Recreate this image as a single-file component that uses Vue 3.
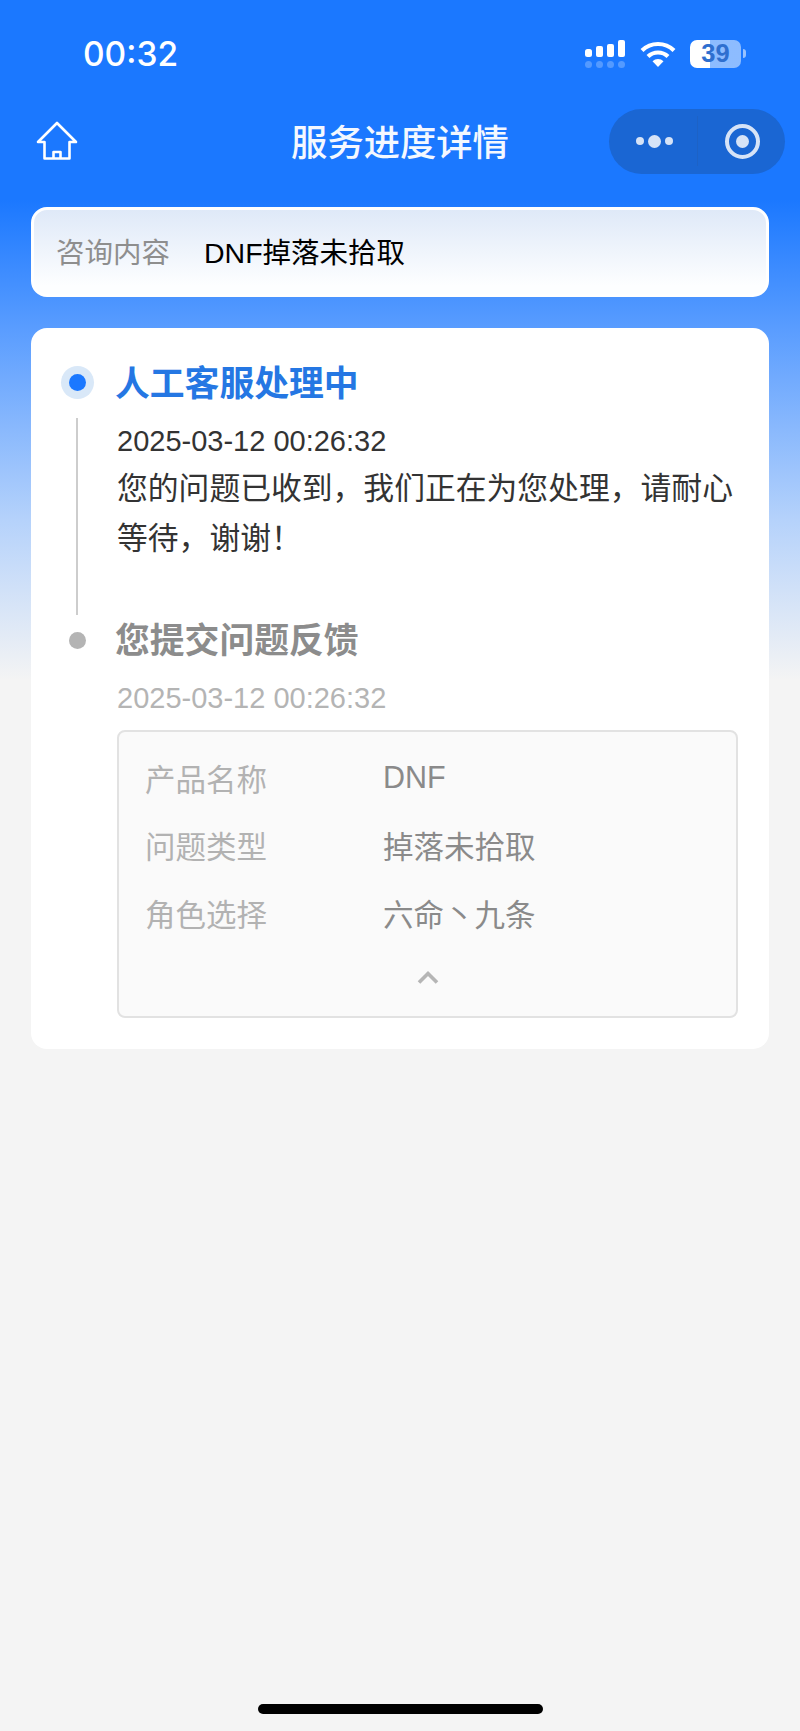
<template>
  <div class="page">
    <!-- status bar -->
    <div class="status-bar">
      <span class="time">00:32</span>
      <div class="status-icons">
        <svg class="signal" width="40" height="28" viewBox="0 0 40 28">
          <g fill="#fff">
            <rect x="0" y="9" width="7" height="8" rx="2.5" />
            <rect x="11" y="6" width="7" height="11" rx="2" />
            <rect x="22" y="4" width="7" height="13" rx="2" />
            <rect x="33" y="0" width="7" height="17" rx="2" />
          </g>
          <g fill="#fff" opacity="0.25">
            <circle cx="3.5" cy="24.5" r="3.5" />
            <circle cx="14.5" cy="24.5" r="3.5" />
            <circle cx="25.5" cy="24.5" r="3.5" />
            <circle cx="36.5" cy="24.5" r="3.5" />
          </g>
        </svg>
        <svg class="wifi" width="36" height="26" viewBox="0 0 36 26">
          <g fill="none" stroke="#fff" stroke-width="4.2">
            <path d="M2 9.5a23 23 0 0 1 32 0" />
            <path d="M8 15.5a14.5 14.5 0 0 1 20 0" />
          </g>
          <path d="M12.5 20.2a8 8 0 0 1 11 0L18 26z" fill="#fff" />
        </svg>
        <div class="battery">
          <span class="battery-level">39</span>
        </div>
        <span class="battery-cap"></span>
      </div>
    </div>

    <!-- nav bar -->
    <div class="nav">
      <svg class="home" width="42" height="40" viewBox="0 0 42 40">
        <path
          d="M8.5 37.5V21H2L21 2l19 19h-6.500v16.500zM17.500 37.500V31h7v6.500"
          fill="none"
          stroke="#fff"
          stroke-width="2.600"
          stroke-linejoin="round"
        />
      </svg>
      <div class="nav-title">服务进度详情</div>
      <div class="capsule">
        <div class="capsule-more">
          <i class="dot-s"></i>
          <i class="dot-l"></i>
          <i class="dot-s"></i>
        </div>
        <div class="capsule-sep"></div>
        <div class="capsule-close"><i></i></div>
      </div>
    </div>

    <div class="summary">
      <span class="summary-label">咨询内容</span>
      <span class="summary-value">DNF掉落未拾取</span>
    </div>

    <div class="card">
      <div class="step">
        <div class="rail">
          <span class="node node-active"><i></i></span>
          <span class="rail-line"></span>
        </div>
        <div class="step-body first">
          <div class="step-title active">人工客服处理中</div>
          <div class="step-date">2025-03-12 00:26:32</div>
          <p class="step-text">您的问题已收到，我们正在为您处理，请耐心等待，谢谢！</p>
        </div>
      </div>

      <div class="step">
        <div class="rail">
          <span class="node"><i class="grey"></i></span>
        </div>
        <div class="step-body">
          <div class="step-title">您提交问题反馈</div>
          <div class="step-date muted">2025-03-12 00:26:32</div>
          <div class="detail">
            <div v-for="row in details" :key="row.label" class="detail-row">
              <span class="detail-label">{{ row.label }}</span>
              <span class="detail-value">{{ row.value }}</span>
            </div>
            <svg class="chevron" width="22" height="14" viewBox="0 0 22 14">
              <path d="M2 12.500L11 3.500l9 9" fill="none" stroke="#b5b5b5" stroke-width="3.600" />
            </svg>
          </div>
        </div>
      </div>
    </div>

    <div class="home-indicator"></div>
  </div>
</template>

<script setup>
const details = [
  { label: '产品名称', value: 'DNF' },
  { label: '问题类型', value: '掉落未拾取' },
  { label: '角色选择', value: '六命丶九条' }
]
</script>

<style>
html,
body {
  margin: 0;
  background: #f4f4f4;
}
</style>

<style scoped>
.page {
  height: 1731px;
  display: flex;
  flex-direction: column;
  overflow: hidden;
  box-sizing: border-box;
  padding-bottom: 17px;
  font-family: "Liberation Sans", "Noto Sans CJK SC", sans-serif;
  background: linear-gradient(180deg, #1b78ff 0, #1b78ff 200px, #5a9dff 330px, #b5d2fb 520px, #f4f4f4 680px);
}

.status-bar {
  height: 107px;
  flex: none;
  display: flex;
  align-items: center;
  justify-content: space-between;
  padding: 0 54px 0 83px;
  color: #fff;
}

.time {
  font-family: Inter, "Liberation Sans", sans-serif;
  font-size: 33.500px;
  font-weight: 550;
}

.status-icons {
  display: flex;
  align-items: center;
}

.wifi {
  margin-left: 15px;
}

.battery {
  width: 51px;
  height: 28px;
  margin-left: 14px;
  border-radius: 7px;
  background: linear-gradient(90deg, #fff 39%, rgba(255, 255, 255, 0.5) 39%);
  display: flex;
  align-items: center;
  justify-content: center;
}

.battery-level {
  font-size: 25.500px;
  font-weight: 700;
  color: #2f6fcf;
}

.battery-cap {
  width: 3px;
  height: 9px;
  margin-left: 2px;
  border-radius: 0 3px 3px 0;
  background: rgba(255, 255, 255, 0.55);
}

.nav {
  height: 68px;
  flex: none;
  display: grid;
  grid-template-columns: 1fr auto 1fr;
  align-items: center;
  padding: 0 15px 0 36px;
  margin-bottom: 32px;
}

.nav-title {
  font-size: 36.300px;
  font-weight: 500;
  color: #f4f8ff;
  margin: 0 0 2px -21px;
}

.capsule {
  justify-self: end;
  width: 176px;
  height: 65px;
  border-radius: 33px;
  background: #1a66d3;
  display: flex;
  align-items: center;
}

.capsule-more {
  width: 88px;
  display: flex;
  align-items: center;
  justify-content: center;
  gap: 4px;
  padding-left: 3px;
  box-sizing: border-box;
}

.capsule-more i {
  display: block;
  border-radius: 50%;
  background: #d6e3f7;
}

.dot-s {
  width: 8px;
  height: 8px;
}

.dot-l {
  width: 13px;
  height: 13px;
}

.capsule-sep {
  width: 1px;
  height: 50px;
  background: #1d62c6;
}

.capsule-close {
  width: 35px;
  height: 35px;
  box-sizing: border-box;
  margin-left: 27px;
  border: 4px solid #d6e3f7;
  border-radius: 50%;
  display: flex;
  align-items: center;
  justify-content: center;
}

.capsule-close i {
  display: block;
  width: 13px;
  height: 13px;
  border-radius: 50%;
  background: #d6e3f7;
}

.summary {
  height: 90px;
  flex: none;
  box-sizing: border-box;
  margin: 0 31px;
  padding: 0 0 3px 22px;
  border: 3px solid #fff;
  border-radius: 16px;
  background: linear-gradient(180deg, #dfe9f8 0, #fdfeff 90%);
  display: flex;
  align-items: center;
  font-size: 28.500px;
}

.summary-label {
  width: 148px;
  flex: none;
  color: #8e8e8e;
}

.summary-value {
  color: #000;
}

.card {
  flex: none;
  margin: 31px 31px 0;
  height: 721px;
  box-sizing: border-box;
  padding: 36px 31px 0 30px;
  border-radius: 16px;
  background: #fff;
}

.step {
  display: flex;
}

.rail {
  width: 55px;
  flex: none;
  display: flex;
  flex-direction: column;
  align-items: flex-start;
}

.node {
  width: 33px;
  height: 38px;
  display: flex;
  align-items: center;
  justify-content: center;
  flex: none;
}

.node i {
  display: block;
  width: 17px;
  height: 17px;
  border-radius: 50%;
  background: #1b78ff;
}

.node i.grey {
  background: #b4b4b4;
}

.node-active {
  height: 33px;
  margin-top: 2px;
  border-radius: 50%;
  background: #d9e8f8;
}

.rail-line {
  width: 2px;
  flex: 1;
  margin: 19px 0 6px 15px;
  background: #cdcdcd;
}

.step-body {
  flex: 1;
  min-width: 0;
  margin-left: 1px;
}

.step-body.first {
  height: 257px;
}

.step-title {
  padding-top: 1px;
  font-size: 34.800px;
  line-height: 38px;
  font-weight: 700;
  color: #8c8c8c;
  margin-left: -2px;
}

.step-title.active {
  color: #2577e3;
}

.step-date {
  margin-top: 20px;
  font-size: 29px;
  line-height: 36px;
  color: #333;
}

.step-date.muted {
  margin-top: 20px;
  color: #b4b4b4;
}

.step-text {
  margin: 5px 0 0;
  font-size: 30.800px;
  line-height: 50px;
  color: #333;
}

.detail {
  box-sizing: border-box;
  height: 288px;
  margin-top: 14px;
  padding: 12px 26px 0;
  border: 2px solid #e2e2e2;
  border-radius: 8px;
  background: #fafafa;
  display: flex;
  flex-direction: column;
}

.detail-row {
  height: 67.500px;
  flex: none;
  display: flex;
  align-items: center;
  font-size: 30.500px;
}

.detail-label {
  width: 238px;
  flex: none;
  color: #b2b2b2;
}

.detail-value {
  color: #8a8a8a;
}

.chevron {
  align-self: center;
  margin-top: 23.500px;
}

.home-indicator {
  width: 285px;
  height: 10px;
  flex: none;
  margin: auto auto 0;
  border-radius: 5px;
  background: #000;
}
</style>
